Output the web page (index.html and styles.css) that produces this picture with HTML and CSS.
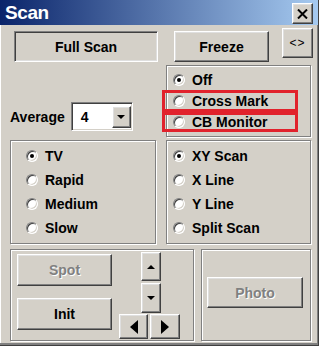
FILE: index.html
```html
<!DOCTYPE html>
<html lang="en">
<head>
  <meta charset="UTF-8" />
  <title>Scan</title>
  <link rel="stylesheet" href="styles.css">
</head>
<body>
  <div class="window">
    <!-- Title bar -->
    <div class="titlebar">
      <span class="title">Scan</span>
      <div class="btn close">
        <svg width="11" height="10" viewBox="0 0 11 10">
          <path d="M1 0.5 L10 9.5 M10 0.5 L1 9.5" stroke="#000" stroke-width="2" fill="none"/>
        </svg>
      </div>
    </div>

    <!-- Top buttons -->
    <div class="row-top">
      <div class="btn sunken full-scan">Full Scan</div>
      <div class="btn freeze">Freeze</div>
      <div class="btn toggle">&lt;&gt;</div>
    </div>

    <!-- Average + mark options -->
    <div class="row-mid">
      <div class="average">
        <span>Average</span>
        <div class="combo">
          <span class="combo-val">4</span>
          <span class="btn combo-btn"><span class="tri-down"></span></span>
        </div>
      </div>
      <div class="group group-mark">
        <div class="radio-row"><span class="radio on"></span>Off</div>
        <div class="radio-row"><span class="radio"></span>Cross Mark</div>
        <div class="radio-row"><span class="radio"></span>CB Monitor</div>
        <div class="mark-box first"></div>
        <div class="mark-box second"></div>
      </div>
    </div>

    <!-- Speed and scan mode -->
    <div class="row-modes">
      <div class="group group-speed">
        <div class="radio-row"><span class="radio on"></span>TV</div>
        <div class="radio-row"><span class="radio"></span>Rapid</div>
        <div class="radio-row"><span class="radio"></span>Medium</div>
        <div class="radio-row"><span class="radio"></span>Slow</div>
      </div>
      <div class="group group-scan">
        <div class="radio-row"><span class="radio on"></span>XY Scan</div>
        <div class="radio-row"><span class="radio"></span>X Line</div>
        <div class="radio-row"><span class="radio"></span>Y Line</div>
        <div class="radio-row"><span class="radio"></span>Split Scan</div>
      </div>
    </div>

    <!-- Spot / arrows / photo -->
    <div class="row-bottom">
      <div class="group group-spot">
        <div class="spot-col">
          <div class="btn big disabled">Spot</div>
          <div class="btn big">Init</div>
        </div>
        <div class="arrows">
          <div class="btn arrow-up"><span class="tri-up"></span></div>
          <div class="btn arrow-down"><span class="tri-down"></span></div>
          <div class="arrow-lr">
            <div class="btn arrow-left"><span class="tri-left"></span></div>
            <div class="btn arrow-right"><span class="tri-right"></span></div>
          </div>
        </div>
      </div>
      <div class="group group-photo">
        <div class="btn photo disabled">Photo</div>
      </div>
    </div>
  </div>
</body>
</html>
```

FILE: styles.css
```css
body {
  margin: 0;
  font-family: "Liberation Sans", Arial, sans-serif;
  font-weight: bold;
  font-size: 14px;
  color: #000;
  background-color: #d4d0c8;
}

.window {
  width: 319px;
  height: 346px;
  box-sizing: border-box;
  background-color: #d4d0c8;
  border-right: 1px solid #404040;
  border-bottom: 1px solid #404040;
  box-shadow: inset -1px -2px #808080, inset 1px 0 #fff;
  overflow: hidden;
}

.titlebar {
  height: 25px;
  display: flex;
  justify-content: space-between;
  align-items: flex-start;
  padding: 0 5px 0 5px;
  background: linear-gradient(to right, #0a246a, #a6caf0);
}

.title {
  color: white;
  font-size: 19px;
  letter-spacing: -0.4px;
  line-height: 25px;
}

/* classic raised button */
.btn {
  display: flex;
  align-items: center;
  justify-content: center;
  box-sizing: border-box;
  border: 1px solid;
  border-color: #fff #404040 #404040 #fff;
  box-shadow: inset -1px -1px #808080, inset 1px 1px #dfdfdf;
  background-color: #d4d0c8;
}

.btn.sunken {
  border-color: #808080 #fff #fff #808080;
  box-shadow: inset 1px 1px #404040, inset -1px -1px #dfdfdf;
}

.btn.disabled {
  color: #808080;
  text-shadow: 1px 1px #fff;
}

.close {
  width: 21px;
  height: 21px;
  margin-top: 3px;
}

.row-top {
  display: flex;
  align-items: flex-start;
  height: 37px;
}

.full-scan {
  width: 144px;
  height: 31px;
  margin: 6px 0 0 14px;
}

.freeze {
  width: 95px;
  height: 31px;
  margin: 6px 0 0 16px;
}

.toggle {
  width: 31px;
  height: 30px;
  margin: 3px 0 0 13px;
  font-weight: normal;
  font-size: 12px;
  letter-spacing: 1px;
}

.row-mid {
  display: flex;
  height: 77px;
}

.average {
  width: 156px;
  padding-left: 10px;
  display: flex;
  align-items: center;
  gap: 6px;
  align-self: flex-end;
  margin-bottom: 8px;
}

.combo {
  width: 62px;
  height: 29px;
  box-sizing: border-box;
  display: flex;
  align-items: center;
  background: white;
  border: 1px solid;
  border-color: #808080 #fff #fff #808080;
  box-shadow: inset 1px 1px #404040, inset -1px -1px #d4d0c8;
}

.combo-val {
  flex: 1;
  padding-left: 9px;
}

.combo-btn {
  width: 19px;
  height: 22px;
  margin-right: 1px;
}

/* etched group box */
.group {
  box-sizing: border-box;
  border: 1px solid #808080;
  box-shadow: inset 1px 1px #fff, 1px 1px #fff;
}

.group-mark {
  position: relative;
  width: 145px;
  height: 72px;
  margin-top: 3px;
  padding: 3px 0 0 6px;
}

.radio-row {
  display: flex;
  align-items: center;
  gap: 7px;
  height: 21px;
}

.radio {
  width: 12px;
  height: 12px;
  box-sizing: border-box;
  border-radius: 50%;
  background: white;
  border: 1px solid;
  border-color: #808080 #fff #fff #808080;
  box-shadow: inset 1px 1px #404040, inset -1px -1px #d4d0c8;
  display: flex;
  align-items: center;
  justify-content: center;
}

.radio.on::after {
  content: "";
  width: 4px;
  height: 4px;
  border-radius: 50%;
  background: #000;
}

.mark-box {
  position: absolute;
  left: -5px;
  width: 136px;
  box-sizing: border-box;
  border: 3px solid #e1222c;
}

.mark-box.first {
  top: 24px;
  height: 22px;
}

.mark-box.second {
  top: 46px;
  height: 20px;
}

.row-modes {
  display: flex;
  gap: 10px;
  padding-left: 10px;
  margin-top: 1px;
}

.row-modes .group {
  height: 104px;
  padding-top: 3px;
}

.row-modes .radio-row {
  height: 24px;
}

.group-speed {
  width: 146px;
  padding-left: 15px;
}

.group-scan {
  width: 145px;
  padding-left: 6px;
}

.row-bottom {
  display: flex;
  gap: 7px;
  padding-left: 10px;
  margin-top: 5px;
}

.row-bottom .group {
  height: 92px;
}

.group-spot {
  width: 184px;
  display: flex;
  padding: 2px 0 0 6px;
}

.spot-col {
  display: flex;
  flex-direction: column;
  gap: 12px;
  margin-top: 2px;
}

.big {
  width: 95px;
  height: 32px;
}

.arrows {
  margin-left: 7px;
  display: flex;
  flex-direction: column;
}

.arrow-up,
.arrow-down {
  width: 20px;
  margin-left: 22px;
}

.arrow-up {
  height: 29px;
  margin-bottom: 2px;
}

.arrow-down {
  height: 30px;
  margin-bottom: 1px;
}

.arrow-lr {
  display: flex;
  gap: 2px;
}

.arrow-left {
  width: 29px;
  height: 25px;
}

.arrow-right {
  width: 30px;
  height: 25px;
}

.tri-up,
.tri-down {
  width: 0;
  height: 0;
  border-left: 4px solid transparent;
  border-right: 4px solid transparent;
}

.tri-up {
  border-bottom: 4px solid #000;
}

.tri-down {
  border-top: 4px solid #000;
}

.tri-left,
.tri-right {
  width: 0;
  height: 0;
  border-top: 7px solid transparent;
  border-bottom: 7px solid transparent;
}

.tri-left {
  border-right: 8px solid #000;
}

.tri-right {
  border-left: 8px solid #000;
}

.group-photo {
  width: 110px;
  padding: 27px 0 0 5px;
}

.photo {
  width: 96px;
  height: 31px;
}
```
